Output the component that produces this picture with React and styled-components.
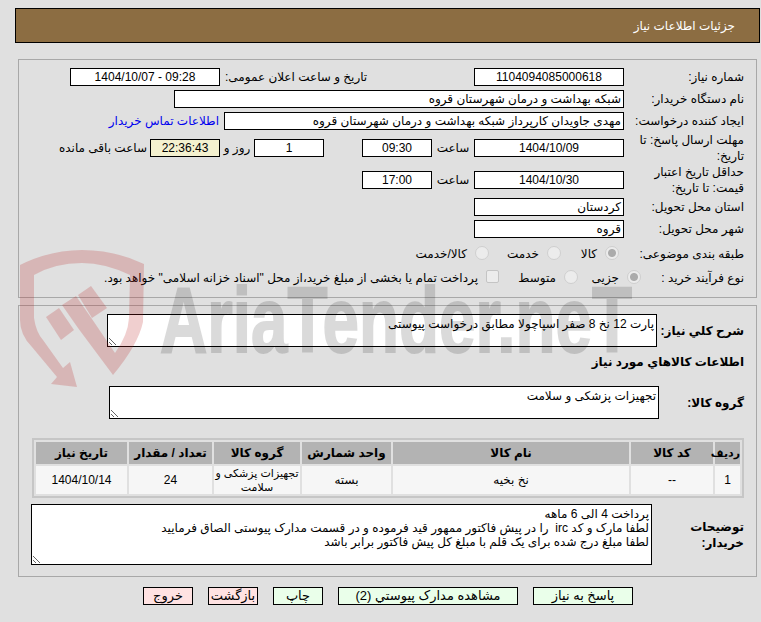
import React from 'react';
import styled, { createGlobalStyle } from 'styled-components';

const GlobalStyle = createGlobalStyle`
  html, body {
    margin: 0;
    padding: 0;
    background: #e0e0e0;
  }
  body {
    font-family: 'Liberation Sans', 'DejaVu Sans', sans-serif;
    font-size: 12px;
    color: #000;
  }
`;

const Page = styled.div`
  position: relative;
  width: 761px;
  height: 622px;
  overflow: hidden;
  direction: rtl;
  padding-top: 8px;
  box-sizing: border-box;
`;

const Header = styled.div`
  height: 35px;
  margin: 0 1px 0 15px;
  padding-right: 24px;
  box-sizing: border-box;
  display: flex;
  align-items: center;
  background: #8c6d42;
  border: 1px solid #000;
  color: #fff;
`;

const Panel = styled.div`
  height: ${(p) => p.$height}px;
  margin: ${(p) => p.$top}px 4px 0 18px;
  padding: 8px 12px 0 13px;
  box-sizing: border-box;
  border: 1px solid #a8a8a8;
`;

const Row = styled.div`
  display: flex;
  align-items: center;
  height: ${(p) => p.$height || 18}px;
  margin-top: ${(p) => p.$top || 0}px;
`;

const Label = styled.div`
  flex: none;
  width: ${(p) => p.$width || 120}px;
  font-weight: ${(p) => (p.$bold ? 'bold' : 'normal')};
  line-height: 16px;
`;

const SideLabel = styled.div`
  flex: none;
  width: 254px;
  padding-left: 5px;
  box-sizing: border-box;
  text-align: left;
`;

const Field = styled.div`
  flex: none;
  width: ${(p) => p.$width}px;
  height: 18px;
  box-sizing: border-box;
  padding: 0 2px;
  border: 1px solid #000;
  background: ${(p) => p.$bg || '#fff'};
  line-height: 16px;
  text-align: ${(p) => (p.$center ? 'center' : 'right')};
  white-space: nowrap;
  overflow: hidden;
`;

const Unit = styled.div`
  flex: none;
  width: ${(p) => p.$width}px;
  text-align: center;
`;

const Spacer = styled.div`
  flex: none;
  width: ${(p) => p.$width}px;
`;

const ContactLink = styled.a`
  margin-right: 5px;
  color: #0000ee;
  white-space: nowrap;
  text-decoration: none;
`;

const Option = styled.div`
  flex: none;
  display: flex;
  align-items: center;
  gap: 8px;
  width: ${(p) => (p.$width ? `${p.$width}px` : 'auto')};
  white-space: nowrap;
`;

const Radio = styled.input.attrs({ type: 'radio', disabled: true })`
  appearance: none;
  flex: none;
  width: 14px;
  height: 14px;
  margin: 0 0 3px;
  border: 1px solid #cfcfcf;
  border-radius: 50%;
  background: ${(p) =>
    p.checked
      ? 'radial-gradient(circle, #ababab 0 3.5px, #ececec 4.5px)'
      : '#ececec'};
`;

const Check = styled.input.attrs({ type: 'checkbox', disabled: true })`
  appearance: none;
  flex: none;
  width: 13px;
  height: 13px;
  margin: 0 0 4px;
  border: 1px solid #c4c4c4;
  border-radius: 2px;
  background: #ececec;
`;

const Notes = styled.textarea`
  display: block;
  flex: none;
  width: ${(p) => p.$width}px;
  height: ${(p) => p.$height}px;
  margin: 0;
  padding: 2px;
  box-sizing: border-box;
  border: 1px solid #000;
  border-radius: 0;
  outline: none;
  background: #fff;
  color: #000;
  font: inherit;
  line-height: 14px;
  overflow: hidden;
`;

const Heading = styled.div`
  margin-top: 7px;
  height: 16px;
  line-height: 16px;
  font-weight: bold;
`;

const Table = styled.table`
  width: 712px;
  margin: 19px 0 0 0;
  border: 2px solid #c6c6c6;
  border-spacing: 2px;
  table-layout: fixed;
  text-align: center;
  font-size: 12px;
`;

const HeadCell = styled.th`
  height: 22px;
  padding: 0;
  background: #b3b3b3;
  font-weight: bold;
  font-size: ${(p) => (p.$small ? '11px' : '12px')};
`;

const Cell = styled.td`
  height: 27px;
  padding: 0;
  background: #f6f6f6;
  line-height: 14px;
  white-space: nowrap;
  font-size: ${(p) => (p.$small ? '11px' : '12px')};
`;

const Actions = styled.div`
  display: flex;
  gap: 15px;
  margin-top: 10px;
  padding-right: 128px;
`;

const Action = styled.button`
  width: ${(p) => p.$width}px;
  height: 18px;
  padding: 0;
  border: 1px solid #000;
  border-radius: 0;
  background: ${(p) => (p.$danger ? '#ffe2e2' : '#eaffea')};
  color: #000;
  font: inherit;
  font-size: 13px;
  line-height: 14px;
`;

const Watermark = styled.svg`
  position: absolute;
  top: 0;
  left: 0;
  pointer-events: none;
`;

const ShieldPart = styled.path`
  fill: rgb(185, 30, 30);
  opacity: 0.21;
`;

const BrandText = styled.text`
  fill: #000;
  stroke: #000;
  stroke-width: 2px;
  opacity: 0.14;
  font-family: 'Liberation Sans', sans-serif;
  font-weight: bold;
  font-size: 92px;
`;

const columns = [25, 82, 236, 89, 86, 83, 91];
const heads = ['ردیف', 'کد کالا', 'نام کالا', 'واحد شمارش', 'گروه کالا', 'تعداد / مقدار', 'تاریخ نیاز'];

const Logo = () => (
  <Watermark width="761" height="622" viewBox="0 0 761 622">
    <ShieldPart d="M20 265 Q50 250 82 250 Q115 250 144 264 L143 322 Q138 345 113 375 L78 328 L62 305 L76 296 L92 319 L115 353 Q128 335 129 318 L130 275 Q105 263 82 263 Q55 263 34 275 L34 318 Q36 332 43 340 L63 368 L70 362 L77 387 L51 384 L57 377 L32 347 Q20 335 20 320 Z" />
    <ShieldPart d="M46 317 L59 308 L74 330 L61 340 Z" />
    <ShieldPart d="M78 295 L91 286 L107 308 L92 318 Z" />
    <BrandText x="160" y="352" textLength="472" lengthAdjust="spacingAndGlyphs" direction="ltr">
      AriaTender.neT
    </BrandText>
  </Watermark>
);

export default function App() {
  return (
    <Page>
      <GlobalStyle />
      <Header>جزئیات اطلاعات نیاز</Header>

      <Panel $top={16} $height={239}>
        <Row>
          <Label>شماره نیاز:</Label>
          <Field $width={150} $center>1104094085000618</Field>
          <SideLabel>تاریخ و ساعت اعلان عمومی:</SideLabel>
          <Field $width={150} $center>09:28 - 1404/10/07</Field>
        </Row>
        <Row $top={4}>
          <Label>نام دستگاه خریدار:</Label>
          <Field $width={450}>شبکه بهداشت و درمان شهرستان قروه</Field>
        </Row>
        <Row $top={4}>
          <Label>ایجاد کننده درخواست:</Label>
          <Field $width={400}>مهدی جاویدان کارپرداز شبکه بهداشت و درمان شهرستان قروه</Field>
          <ContactLink href="#">اطلاعات تماس خریدار</ContactLink>
        </Row>
        <Row $top={9}>
          <Label>مهلت ارسال پاسخ: تا تاریخ:</Label>
          <Field $width={150} $center>1404/10/09</Field>
          <Unit $width={42}>ساعت</Unit>
          <Field $width={70} $center>09:30</Field>
          <Spacer $width={38} />
          <Field $width={70} $center>1</Field>
          <Unit $width={34}>روز و</Unit>
          <Field $width={70} $center $bg="#f4f1cf">22:36:43</Field>
          <Unit $width={94}>ساعت باقی مانده</Unit>
        </Row>
        <Row $top={14}>
          <Label>حداقل تاریخ اعتبار قیمت: تا تاریخ:</Label>
          <Field $width={150} $center>1404/10/30</Field>
          <Unit $width={42}>ساعت</Unit>
          <Field $width={70} $center>17:00</Field>
        </Row>
        <Row $top={9}>
          <Label>استان محل تحویل:</Label>
          <Field $width={150}>کردستان</Field>
        </Row>
        <Row $top={4}>
          <Label>شهر محل تحویل:</Label>
          <Field $width={150}>قروه</Field>
        </Row>
        <Row $top={7}>
          <Label $width={125}>طبقه بندی موضوعی:</Label>
          <Option $width={58}><Radio checked readOnly />کالا</Option>
          <Option $width={72}><Radio />خدمت</Option>
          <Option $width={90}><Radio />کالا/خدمت</Option>
        </Row>
        <Row $top={6}>
          <Label $width={103}>نوع فرآیند خرید :</Label>
          <Option $width={63}><Radio checked readOnly />جزیی</Option>
          <Option $width={79}><Radio />متوسط</Option>
          <Option><Check />پرداخت تمام یا بخشی از مبلغ خرید،از محل "اسناد خزانه اسلامی" خواهد بود.</Option>
        </Row>
      </Panel>

      <Panel $top={7} $height={272}>
        <Row $height={33}>
          <Label $width={87} $bold>شرح کلي نیاز:</Label>
          <Notes $width={550} $height={33} readOnly defaultValue="پارت 12 نخ 8 صفر اسپاچولا مطابق درخواست پیوستی" />
        </Row>
        <Heading>اطلاعات کالاهاي مورد نیاز</Heading>
        <Row $height={33} $top={16}>
          <Label $width={85} $bold>گروه کالا:</Label>
          <Notes $width={550} $height={33} readOnly defaultValue="تجهیزات پزشکی و سلامت" />
        </Row>
        <Table>
          <colgroup>
            {columns.map((w, i) => <col key={i} width={w} />)}
          </colgroup>
          <thead>
            <tr>{heads.map((h, i) => <HeadCell key={h} $small={i === 0}>{h}</HeadCell>)}</tr>
          </thead>
          <tbody>
            <tr>
              <Cell>1</Cell>
              <Cell>--</Cell>
              <Cell>نخ بخیه</Cell>
              <Cell>بسته</Cell>
              <Cell $small>تجهیزات پزشکی و<br />سلامت</Cell>
              <Cell>24</Cell>
              <Cell>1404/10/14</Cell>
            </tr>
          </tbody>
        </Table>
        <Row $height={61} $top={6}>
          <Label $width={92} $bold>توضیحات خریدار:</Label>
          <Notes
            $width={621}
            $height={61}
            readOnly
            defaultValue={'پرداخت 4 الی 6 ماهه\nلطفا مارک و کد irc  را در پیش فاکتور ممهور قید فرموده و در قسمت مدارک پیوستی الصاق فرمایید\nلطفا مبلغ درج شده برای یک قلم با مبلغ کل پیش فاکتور برابر باشد'}
          />
        </Row>
      </Panel>

      <Actions>
        <Action $width={100}>پاسخ به نیاز</Action>
        <Action $width={180}>مشاهده مدارک پیوستي (2)</Action>
        <Action $width={50}>چاپ</Action>
        <Action $width={50} $danger>بازگشت</Action>
        <Action $width={50} $danger>خروج</Action>
      </Actions>

      <Logo />
    </Page>
  );
}
